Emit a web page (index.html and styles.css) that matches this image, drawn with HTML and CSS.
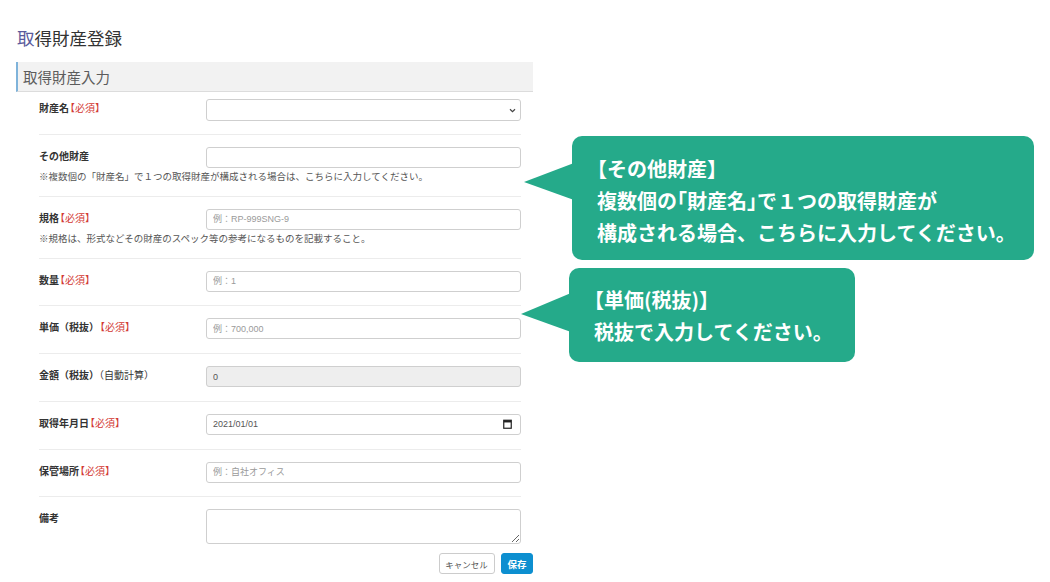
FILE: index.html
```html
<!DOCTYPE html>
<html lang="ja">
<head>
<meta charset="utf-8">
<title>取得財産登録</title>
<link rel="stylesheet" href="styles.css">
</head>
<body>
<div class="page">
  <h1 class="title"><span class="accent">取</span>得財産登録</h1>
  <section class="panel">
    <h2 class="panel-head">取得財産入力</h2>
    <div class="form">
      <div class="row first">
        <label class="label">財産名<span class="req">【必須】</span></label>
        <div class="control">
          <select class="input select"><option></option></select>
          <svg class="chev" width="7" height="5" viewBox="0 0 7 5"><path d="M1 1.2 L3.5 3.6 L6 1.2" fill="none" stroke="#444" stroke-width="1.2"/></svg>
        </div>
      </div>
      <div class="row has-help">
        <label class="label">その他財産</label>
        <div class="control"><input class="input" type="text"></div>
        <p class="help">※複数個の「財産名」で１つの取得財産が構成される場合は、こちらに入力してください。</p>
      </div>
      <div class="row has-help">
        <label class="label">規格<span class="req">【必須】</span></label>
        <div class="control"><input class="input" type="text" placeholder="例：RP-999SNG-9"></div>
        <p class="help">※規格は、形式などその財産のスペック等の参考になるものを記載すること。</p>
      </div>
      <div class="row">
        <label class="label">数量<span class="req">【必須】</span></label>
        <div class="control"><input class="input" type="text" placeholder="例：1"></div>
      </div>
      <div class="row">
        <label class="label">単価（税抜）<span class="req">【必須】</span></label>
        <div class="control"><input class="input" type="text" placeholder="例：700,000"></div>
      </div>
      <div class="row">
        <label class="label">金額（税抜）<span class="sub">（自動計算）</span></label>
        <div class="control"><input class="input" type="text" value="0" disabled></div>
      </div>
      <div class="row">
        <label class="label">取得年月日<span class="req">【必須】</span></label>
        <div class="control">
          <input class="input date" type="text" value="2021/01/01">
          <svg class="cal" width="9" height="10" viewBox="0 0 9 10"><rect x="0.75" y="1.25" width="7.5" height="8" fill="none" stroke="#222" stroke-width="1.2"/><rect x="0.75" y="1.25" width="7.5" height="2.2" fill="#222"/></svg>
        </div>
      </div>
      <div class="row">
        <label class="label">保管場所<span class="req">【必須】</span></label>
        <div class="control"><input class="input" type="text" placeholder="例：自社オフィス"></div>
      </div>
      <div class="row last">
        <label class="label">備考</label>
        <div class="control"><textarea class="input area"></textarea></div>
      </div>
    </div>
    <div class="actions">
      <button class="btn">キャンセル</button>
      <button class="btn primary">保存</button>
    </div>
  </section>
</div>

<div class="callout c1"><span class="hp">【</span>その他財産】<br>複数個の<span class="hp">「</span>財産名<span class="hp">」</span>で１つの取得財産が<br>構成される場合、こちらに入力してください。</div>
<div class="callout c2"><span class="hp">【</span>単価(税抜)】<br>税抜で入力してください。</div>
</body>
</html>
```

FILE: styles.css
```css
html, body {
  margin: 0;
  padding: 0;
  background: #fff;
}

body {
  font-family: "Noto Sans CJK JP", "Noto Sans", sans-serif;
  color: #333;
  width: 1050px;
  height: 582px;
  overflow: hidden;
  position: relative;
}

.page {
  padding-left: 16px;
  width: 517px;
}

.title {
  margin: 26px 0 12px 1px;
  font-size: 17.5px;
  line-height: 24px;
  font-weight: 400;
  color: #333;
}

.accent {
  color: #5a5a9c;
}

.panel-head {
  margin: 0;
  height: 29px;
  line-height: 29px;
  background: #f2f2f2;
  border-left: 2px solid #7fb3da;
  border-bottom: 1px solid #dcdcdc;
  padding-left: 5px;
  font-size: 14.5px;
  font-weight: 400;
  color: #5c5c5c;
}

.form {
  padding: 0 12px 0 23px;
}

.row {
  display: grid;
  grid-template-columns: 167px 1fr;
  padding: 12px 0 13.75px;
  border-top: 1px solid #ececec;
}

.row.has-help {
  padding-bottom: 12px;
}

.row.first {
  border-top: none;
  padding-top: 7px;
  padding-bottom: 12.5px;
}

.row.last {
  padding-bottom: 0;
}

.label {
  font-size: 10px;
  line-height: 17px;
  font-weight: 700;
  color: #333;
}

.req {
  color: #d33a35;
  font-weight: 400;
  font-feature-settings: "halt";
  margin-left: 1px;
}

.sub {
  font-weight: 400;
}

.control {
  position: relative;
}

.input {
  display: block;
  box-sizing: border-box;
  width: 100%;
  height: 21px;
  margin: 0;
  border: 1px solid #cfcfcf;
  border-radius: 3px;
  background: #fff;
  padding: 0 6px;
  font-family: "Liberation Sans", "Noto Sans CJK JP", sans-serif;
  font-size: 9px;
  color: #555;
  outline: none;
}

.input::placeholder {
  color: #9a9a9a;
}

.input:disabled {
  background: #eeeeee;
  color: #555;
}

.select {
  appearance: none;
  -webkit-appearance: none;
  height: 22px;
}

.chev {
  position: absolute;
  right: 5px;
  top: 9px;
}

.cal {
  position: absolute;
  right: 9px;
  top: 5.5px;
}

.area {
  height: 34.5px;
  resize: vertical;
  padding: 4px 6px;
}

.help {
  grid-column: 1 / -1;
  margin: 0;
  font-size: 9.5px;
  line-height: 16px;
  color: #555;
}

.actions {
  display: flex;
  justify-content: flex-end;
  gap: 6.5px;
  margin-top: 9.5px;
}

.btn {
  height: 21px;
  box-sizing: border-box;
  border: 1px solid #cccccc;
  border-radius: 3px;
  background: #fff;
  color: #555;
  font-family: "Noto Sans CJK JP", sans-serif;
  font-size: 8.5px;
  padding: 0;
  width: 56px;
  white-space: nowrap;
  cursor: pointer;
}

.btn.primary {
  width: 32px;
  background: #0d8fd0;
  border-color: #0d8fd0;
  color: #fff;
  font-weight: 700;
  font-size: 9.5px;
}

.callout {
  position: absolute;
  background: #25aa8a;
  color: #fff;
  border-radius: 10px;
  font-family: "Noto Sans CJK JP", sans-serif;
  font-weight: 700;
  font-size: 20px;
  line-height: 32px;
  white-space: nowrap;
  box-sizing: border-box;
  padding-left: 25px;
}

.hp {
  font-feature-settings: "halt";
}

.callout::before {
  content: "";
  position: absolute;
  left: -48px;
  width: 50px;
  background: #25aa8a;
}

.c1 {
  left: 572px;
  top: 136px;
  width: 462px;
  height: 124px;
  padding-top: 17px;
}

.c1::before {
  top: 27px;
  height: 37px;
  clip-path: polygon(0 19px, 100% 0, 100% 100%);
}

.c2 {
  left: 569px;
  top: 268px;
  width: 286px;
  height: 94px;
  padding-top: 16px;
}

.c2::before {
  top: 25px;
  height: 39px;
  clip-path: polygon(0 21px, 100% 0, 100% 100%);
}
```
